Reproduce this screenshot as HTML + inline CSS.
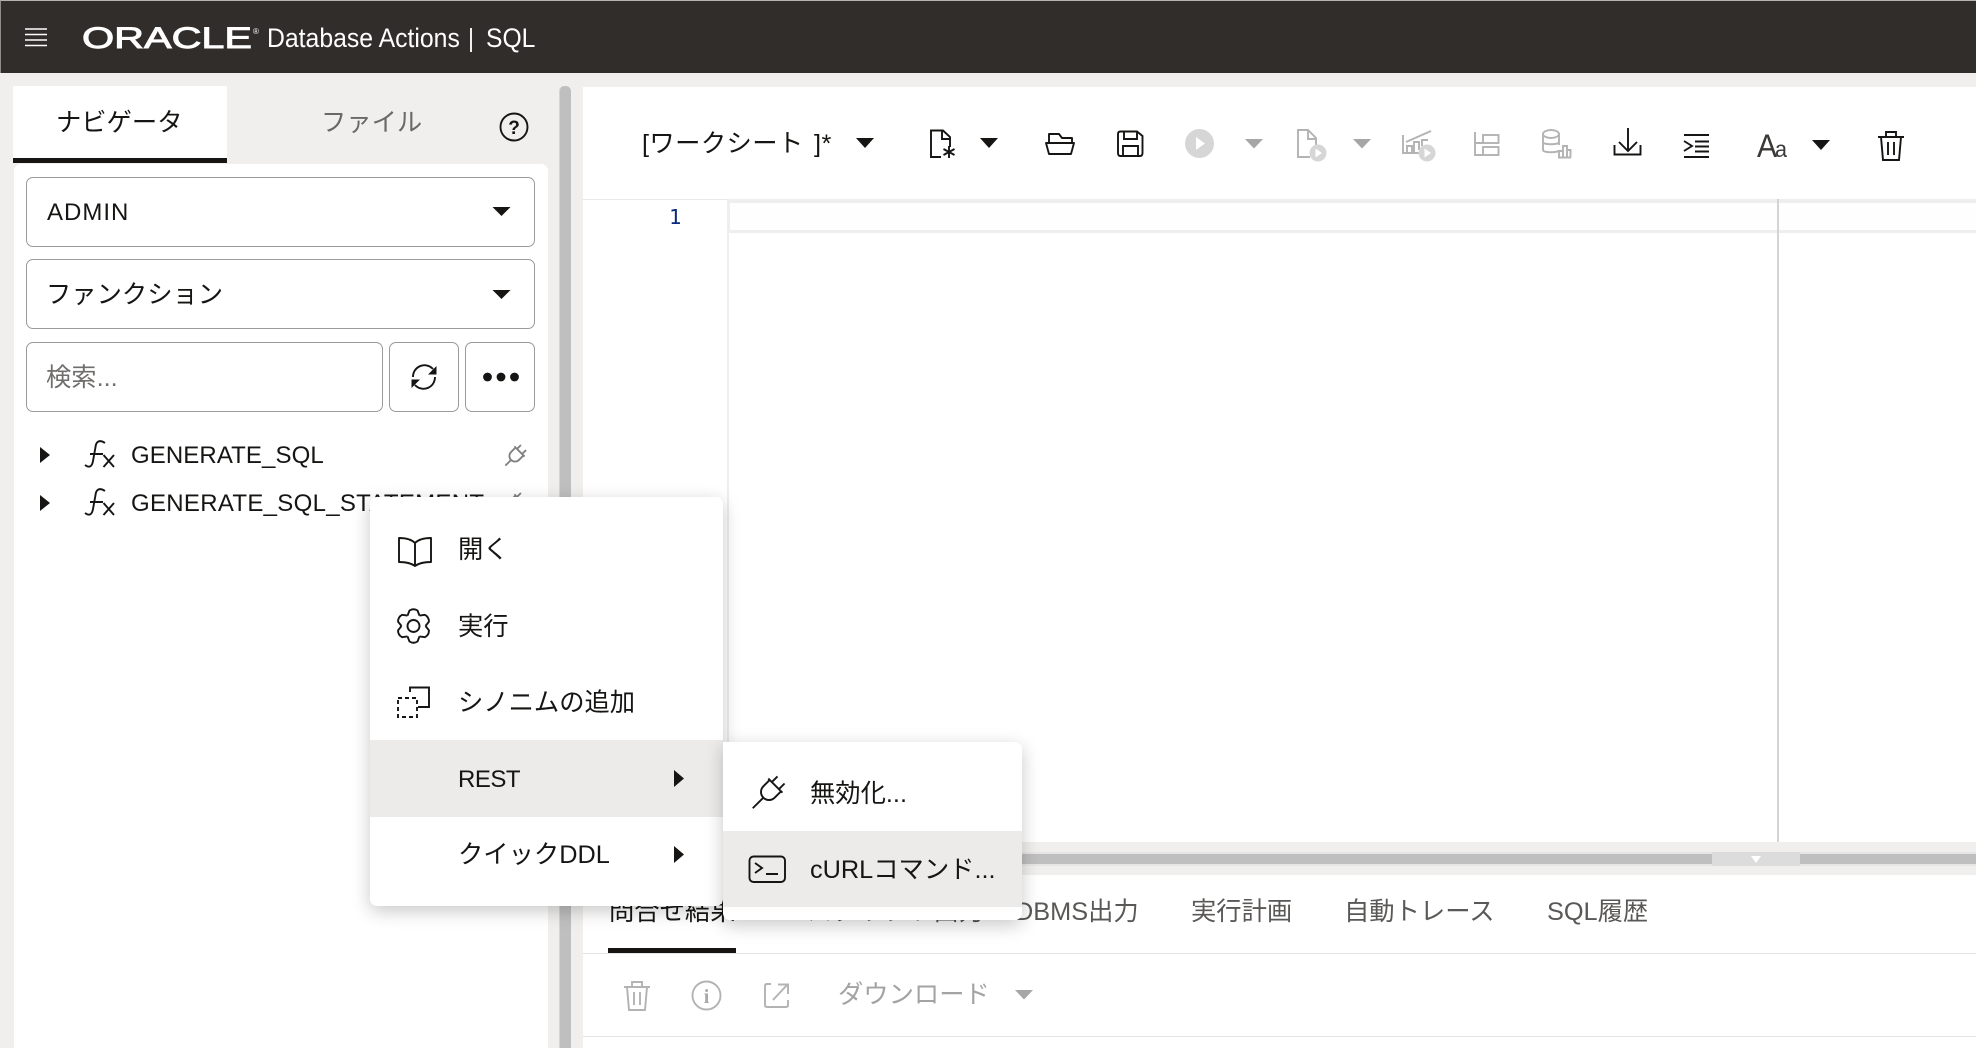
<!DOCTYPE html>
<html lang="ja"><head><meta charset="utf-8"><title>Database Actions | SQL</title>
<style>
html,body{margin:0;padding:0}
body{width:1976px;height:1048px;position:relative;overflow:hidden;background:#f0efed;font-family:"Liberation Sans","Noto Sans CJK JP",sans-serif;color:#161513}
.a{position:absolute;box-sizing:border-box}
.t{position:absolute;white-space:nowrap;line-height:40px;height:40px;font-size:24px;letter-spacing:.3px}
.j{font-size:25.3px;letter-spacing:0}
.box{border:1px solid #9b9a98;border-radius:7px;background:#fff}
svg{position:absolute;left:0;top:0}
.s{fill:none;stroke:#161513;stroke-width:1.9}
.g{fill:none;stroke:#b3b3b3;stroke-width:1.9}
</style></head><body>
<div class="a" style="left:0;top:0;width:1976px;height:73px;background:#312d2a;border-top:1px solid #b5b3b1;border-left:1px solid #8f8c8a"></div>
<div class="t" style="left:267px;top:18px;color:#fff;font-size:26.5px;letter-spacing:0;transform-origin:left;transform:scaleX(.935)">Database Actions</div>
<div class="a" style="left:470px;top:28px;width:1.5px;height:24px;background:#f0f0f0"></div>
<div class="t" style="left:486px;top:18px;color:#fff;font-size:26.5px;letter-spacing:0;transform-origin:left;transform:scaleX(.93)">SQL</div>

<!-- left -->
<div class="a" style="left:13px;top:86px;width:214px;height:72px;background:#fff"></div>
<div class="a" style="left:13px;top:158px;width:214px;height:5px;background:#161513"></div>
<div class="a" style="left:14px;top:164px;width:534px;height:884px;background:#fff;border-radius:7px 7px 0 0"></div>
<div class="t j" style="left:56px;top:103px">ナビゲータ</div>
<div class="t j" style="left:321px;top:103px;color:#6b6967">ファイル</div>
<div class="a" style="left:559px;top:86px;width:12px;height:962px;background:#bfbfbf;border-radius:5px 5px 0 0;border-left:1px solid #d4d4d4"></div>
<div class="a box" style="left:26px;top:177px;width:509px;height:70px"></div>
<div class="t" style="left:47px;top:193px;letter-spacing:1px">ADMIN</div>
<div class="a box" style="left:26px;top:259px;width:509px;height:70px"></div>
<div class="t j" style="left:46px;top:275px">ファンクション</div>
<div class="a box" style="left:26px;top:342px;width:357px;height:70px"></div>
<div class="t j" style="left:46px;top:358px;color:#6f6e6c">検索...</div>
<div class="a box" style="left:389px;top:342px;width:70px;height:70px"></div>
<div class="a box" style="left:465px;top:342px;width:70px;height:70px"></div>
<div class="t" style="left:131px;top:436px;letter-spacing:.1px">GENERATE_SQL</div>
<div class="t" style="left:131px;top:484px">GENERATE_SQL_STATEMENT</div>

<!-- right -->
<div class="a" style="left:583px;top:87px;width:1393px;height:755px;background:#fff"></div>
<div class="a" style="left:583px;top:199px;width:1393px;height:1px;background:#e8e8e8"></div>
<div class="a" style="left:727px;top:199px;width:1249px;height:34px;background:#eeeeee"></div>
<div class="a" style="left:730px;top:203px;width:1246px;height:27px;background:#fefefe"></div>
<div class="a" style="left:727px;top:199px;width:2px;height:643px;background:#eeeeee"></div>
<div class="a" style="left:1777px;top:199px;width:2px;height:643px;background:#d4d4d4"></div>
<div class="t" style="left:669px;top:197px;font-size:20.5px;letter-spacing:0;color:#0b2a7b;font-family:'DejaVu Sans Mono',monospace">1</div>
<div class="t j" style="left:642px;top:124px;word-spacing:3px;letter-spacing:.4px">[ワークシート ]*</div>

<!-- splitter -->
<div class="a" style="left:583px;top:852px;width:1393px;height:14px;background:#e6e6e6"></div>
<div class="a" style="left:583px;top:854px;width:1393px;height:10px;background:#bfbfbf"></div>
<div class="a" style="left:1712px;top:852px;width:88px;height:14px;background:#dcdcdc"></div>

<!-- bottom -->
<div class="a" style="left:583px;top:875px;width:1393px;height:173px;background:#fff"></div>
<div class="a" style="left:583px;top:953px;width:1393px;height:1px;background:#e4e4e4"></div>
<div class="a" style="left:583px;top:1036px;width:1393px;height:1px;background:#e4e4e4"></div>
<div class="a" style="left:608px;top:948px;width:128px;height:5px;background:#161513"></div>
<div class="t j" style="left:609px;top:892px">問合せ結果</div>
<div class="t j" style="left:807px;top:892px;color:#5a5856">スクリプト出力</div>
<div class="t j" style="left:1015px;top:892px;color:#5a5856">DBMS出力</div>
<div class="t j" style="left:1191px;top:892px;color:#5a5856">実行計画</div>
<div class="t j" style="left:1344px;top:892px;color:#5a5856">自動トレース</div>
<div class="t j" style="left:1547px;top:892px;color:#5a5856">SQL履歴</div>
<div class="t j" style="left:838px;top:975px;color:#a3a3a3">ダウンロード</div>

<svg width="1976" height="1048" viewBox="0 0 1976 1048" style="z-index:1">
<path d="M25 29H47M25 34.5H47M25 40H47M25 45.5H47" stroke="#fff" stroke-width="1.6" fill="none"/>
<text x="82" y="48" font-family="Liberation Sans" font-size="30" fill="#fff" stroke="#fff" stroke-width=".9" textLength="170" lengthAdjust="spacingAndGlyphs">ORACLE</text>
<text x="253" y="34" font-family="Liberation Sans" font-size="8" fill="#fff">®</text>
<circle cx="514" cy="127" r="13.5" class="s"/>
<text x="514" y="134" text-anchor="middle" font-family="Liberation Sans" font-weight="bold" font-size="19" fill="#161513">?</text>
<!-- select arrows -->
<path d="M492.5 207H510.5L501.5 216ZM492.5 290H510.5L501.5 299Z" fill="#161513"/>
<!-- refresh -->
<path d="M413 377a11.5 11.5 0 0 1 20-8M435 377a11.5 11.5 0 0 1-20 8" class="s" stroke-width="1.7"/>
<path d="M436.5 366V374.5H428ZM411.5 388V379.5H420Z" fill="#161513"/>
<circle cx="487.5" cy="377" r="4.4" fill="#161513"/><circle cx="501" cy="377" r="4.4" fill="#161513"/><circle cx="514.5" cy="377" r="4.4" fill="#161513"/>
<!-- tree arrows -->
<path d="M40 447L50 455L40 463ZM40 495L50 503L40 511Z" fill="#161513"/>
<!-- fx -->
<path d="M105 443C99 439 96 442 95.5 447L93 461C92 467 89 468 85 465M90 454H103M103.5 455L114 467M114 455L103.5 467" class="s" stroke-width="1.9"/>
<path transform="translate(0 48)" d="M105 443C99 439 96 442 95.5 447L93 461C92 467 89 468 85 465M90 454H103M103.5 455L114 467M114 455L103.5 467" class="s" stroke-width="1.9"/>
<!-- plugs -->
<g transform="translate(515 456) rotate(45) scale(.8)" fill="none" stroke="#808080" stroke-width="2.3"><path d="M-4.5-8V-15M4.500-8V-15M-9-8H9M-7-8V0A7 7 0 0 0 7 0V-8M0 7V17"/></g>
<g transform="translate(515 504) rotate(45) scale(.8)" fill="none" stroke="#808080" stroke-width="2.3"><path d="M-4.5-8V-15M4.500-8V-15M-9-8H9M-7-8V0A7 7 0 0 0 7 0V-8M0 7V17"/></g>
<!-- toolbar -->
<path d="M856 138H874L865 148ZM980 138H998L989 148ZM1812 140H1830L1821 150Z" fill="#161513"/>
<path d="M1245 139H1263L1254 148.5ZM1353 139H1371L1362 148.5Z" fill="#a6a6a6"/>
<path d="M950 147V137L943 130.5H931V157H941M942 131V139H950" class="s"/>
<path d="M949 146V158M943.5 149L954.5 155M954.5 149L943.5 155" class="s"/>
<path d="M1049 143V134H1059L1062 138H1072V143M1046 143H1074L1071 154H1049Z" class="s" stroke-linejoin="round"/>
<path d="M1120.5 131.5H1137L1142.5 136V153Q1142.5 156 1140 156H1120.5Q1118 156 1118 153V134Q1118 131.5 1120.5 131.5ZM1124 131.5V139H1137V131.5M1123 156V146H1138V156" class="s"/>
<circle cx="1199.5" cy="143.5" r="14.5" fill="#d6d6d6"/><path d="M1196 137L1205 143.5L1196 150Z" fill="#fff"/>
<path d="M1316 146V138L1308 130H1298V157H1310M1308 130V139H1316" class="g"/>
<circle cx="1318" cy="153" r="8.5" fill="#d6d6d6"/><path d="M1315.5 148.5L1322 153L1315.5 157.5Z" fill="#fff"/>
<path d="M1403 135V153H1420M1406 142L1431 131M1407 153V146H1412V153M1414 153V142H1419V150M1422 146V140H1428" class="g"/>
<circle cx="1427" cy="153" r="8.5" fill="#d6d6d6"/><path d="M1424.5 148.5L1431 153L1424.5 157.5Z" fill="#fff"/>
<path d="M1475 132V155H1483M1475 143H1483" class="g"/>
<rect x="1483" y="135" width="15.5" height="8" class="g"/><rect x="1483" y="147" width="15.5" height="8" class="g"/>
<path d="M1543 134V150C1543 153 1559 153 1559 150M1559 134V145M1543 142C1543 145 1559 145 1559 142" class="g"/>
<ellipse cx="1551" cy="134" rx="8" ry="4" class="g"/>
<path d="M1559 157.5V151H1563V157.5M1563 157.5V146H1567V157.5M1567 157.5V150H1570.5V157.5M1558 157.5H1571" class="g" stroke-width="1.5"/>
<path d="M1628 128V150M1619 142L1628 151L1637 142M1614.5 145V154.5H1640.5V145" class="s"/>
<path d="M1684 135H1709M1684 157H1709M1684 141L1692 146L1684 151M1695 141.5H1709M1695 146.5H1709M1695 151.5H1709" class="s"/>
<text x="1757" y="157" font-family="Liberation Sans" font-size="32" fill="#3a3937" textLength="20" lengthAdjust="spacingAndGlyphs">A</text>
<text x="1775" y="157" font-family="Liberation Sans" font-size="23" fill="#3a3937" textLength="12" lengthAdjust="spacingAndGlyphs">a</text>
<g class="s"><path d="M1878 137H1904M1886 137V132H1896V137M1881 137L1883 160H1899L1901 137M1888 142V155M1894 142V155"/></g>
<!-- splitter arrow -->
<path d="M1751 856H1761L1756 863Z" fill="#fff"/>
<!-- bottom toolbar -->
<g transform="translate(-1254 850)" class="g"><path d="M1878 137H1904M1886 137V132H1896V137M1881 137L1883 160H1899L1901 137M1888 142V155M1894 142V155"/></g>
<circle cx="706.5" cy="995.5" r="14" class="g"/>
<text x="706.5" y="1003" text-anchor="middle" font-family="Liberation Serif" font-weight="bold" font-size="20" fill="#a9a9a9">i</text>
<path d="M771 984H767Q765 984 765 986V1005Q765 1007 767 1007H786Q788 1007 788 1005V1000M773 1000L787 985M778 984.5H788V994" class="g"/>
<path d="M1015 990H1033L1024 999.5Z" fill="#a6a6a6"/>
</svg>

<!-- context menu -->
<div class="a" style="left:370px;top:497px;width:353px;height:409px;background:#fff;border-radius:7px;box-shadow:0 5px 18px rgba(0,0,0,.22);z-index:5;overflow:hidden">
  <div class="a" style="left:0;top:243px;width:353px;height:77px;background:#ecebea"></div>
  <div class="t j" style="left:88px;top:33px">開く</div>
  <div class="t j" style="left:88px;top:110px">実行</div>
  <div class="t j" style="left:88px;top:186px">シノニムの追加</div>
  <div class="t" style="left:88px;top:263px;letter-spacing:-.5px">REST</div>
  <div class="t j" style="left:88px;top:338px">クイックDDL</div>
</div>
<div class="a" style="left:723px;top:742px;width:299px;height:178px;background:#fff;border-radius:0 7px 7px 7px;box-shadow:0 5px 18px rgba(0,0,0,.22);z-index:6;overflow:hidden">
  <div class="a" style="left:0;top:89px;width:299px;height:76px;background:#ecebea"></div>
  <div class="t j" style="left:87px;top:32px">無効化...</div>
  <div class="t j" style="left:87px;top:108px">cURLコマンド...</div>
</div>
<svg width="1976" height="1048" viewBox="0 0 1976 1048" style="z-index:7;pointer-events:none">
<path d="M415 543C411 539 405 538 399 538V562C405 562 411 563 415 566C419 563 425 562 431 562V538C425 538 419 539 415 543ZM415 543V566" class="s" stroke-linejoin="round"/>
<g transform="translate(413.5 626)" class="s" stroke-linejoin="round">
<circle r="6"/>
<path d="M-6-10.4L-4-15.5Q0-18 4-15.5L6-10.4"/>
<path transform="rotate(60)" d="M-6-10.4L-4-15.5Q0-18 4-15.5L6-10.4"/>
<path transform="rotate(120)" d="M-6-10.4L-4-15.5Q0-18 4-15.5L6-10.4"/>
<path transform="rotate(180)" d="M-6-10.4L-4-15.5Q0-18 4-15.5L6-10.4"/>
<path transform="rotate(240)" d="M-6-10.4L-4-15.5Q0-18 4-15.5L6-10.4"/>
<path transform="rotate(300)" d="M-6-10.4L-4-15.5Q0-18 4-15.5L6-10.4"/>
</g>
<path d="M410 692V687.5H429V707H418" class="s"/>
<rect x="398" y="698" width="19" height="19" class="s" stroke-dasharray="4 3"/>
<path d="M674 770L684 778.5L674 787ZM674 846L684 854.5L674 863Z" fill="#161513"/>
<g transform="translate(769 792) rotate(45)" class="s" stroke-width="2"><path d="M-5-9V-17M5-9V-17M-10-9H10M-8-9V0A8 8 0 0 0 8 0V-9M0 8V23"/></g>
<rect x="749.5" y="856.5" width="35.5" height="25.5" rx="4" class="s"/>
<path d="M755 863L762 868L755 873M766 874H778" class="s"/>
</svg>
</body></html>
